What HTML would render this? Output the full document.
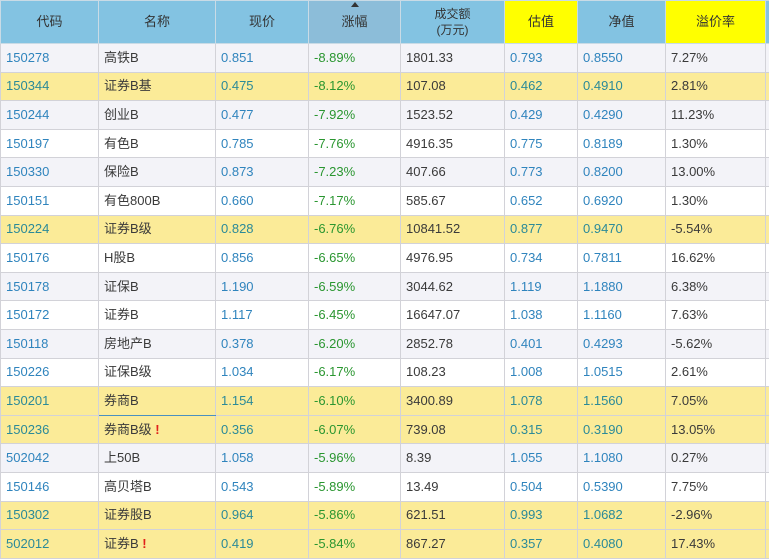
<!DOCTYPE html><html><head><meta charset="utf-8"><style>
body{margin:0;width:769px;height:558px;overflow:hidden;background:#fff;font-family:"Liberation Sans","Noto Sans CJK SC",sans-serif;font-size:13px;}
table{border-collapse:collapse;table-layout:fixed;width:769px;}
td,th{border:1px solid #d2d2d8;padding:0 0 0 5px;height:27.6px;line-height:16px;vertical-align:middle;white-space:nowrap;overflow:hidden;color:#3a3a3a;}
td span,td{vertical-align:middle}
th{background:#83c3e2;font-weight:normal;text-align:center;height:42px;padding:0;color:#333;border-color:#c9dbe6;}
th.y{background:#ffff00;}
th.s{background:#8cbdd9;position:relative;}
th.s:before{content:"";position:absolute;top:1px;left:50%;margin-left:-4px;border:4px solid transparent;border-bottom:5px solid #333;border-top:0;}
tr.l td{background:#f3f3f8}tr.w td{background:#fff}tr.y td{background:#fbeb98}
.b{color:#2f84bd}.g{color:#2a9630}
tr.y .b{color:#2b8a98}
.r{color:#e0201b;font-weight:bold;vertical-align:baseline}
</style></head><body><table>
<colgroup><col width="98"><col width="117"><col width="93"><col width="92"><col width="104"><col width="73"><col width="88"><col width="100"><col width="4"></colgroup>
<tr><th>代码</th><th>名称</th><th>现价</th><th class="s">涨幅</th><th style="font-size:12px;line-height:16px">成交额<br>(万元)</th><th class="y">估值</th><th>净值</th><th class="y">溢价率</th><th></th></tr>
<tr class="l"><td class="b">150278</td><td>高铁B</td><td class="b">0.851</td><td class="g">-8.89%</td><td>1801.33</td><td class="b">0.793</td><td class="b">0.8550</td><td>7.27%</td><td></td></tr>
<tr class="y"><td class="b">150344</td><td>证券B基</td><td class="b">0.475</td><td class="g">-8.12%</td><td>107.08</td><td class="b">0.462</td><td class="b">0.4910</td><td>2.81%</td><td></td></tr>
<tr class="l"><td class="b">150244</td><td>创业B</td><td class="b">0.477</td><td class="g">-7.92%</td><td>1523.52</td><td class="b">0.429</td><td class="b">0.4290</td><td>11.23%</td><td></td></tr>
<tr class="w"><td class="b">150197</td><td>有色B</td><td class="b">0.785</td><td class="g">-7.76%</td><td>4916.35</td><td class="b">0.775</td><td class="b">0.8189</td><td>1.30%</td><td></td></tr>
<tr class="l"><td class="b">150330</td><td>保险B</td><td class="b">0.873</td><td class="g">-7.23%</td><td>407.66</td><td class="b">0.773</td><td class="b">0.8200</td><td>13.00%</td><td></td></tr>
<tr class="w"><td class="b">150151</td><td>有色800B</td><td class="b">0.660</td><td class="g">-7.17%</td><td>585.67</td><td class="b">0.652</td><td class="b">0.6920</td><td>1.30%</td><td></td></tr>
<tr class="y"><td class="b">150224</td><td>证券B级</td><td class="b">0.828</td><td class="g">-6.76%</td><td>10841.52</td><td class="b">0.877</td><td class="b">0.9470</td><td>-5.54%</td><td></td></tr>
<tr class="w"><td class="b">150176</td><td>H股B</td><td class="b">0.856</td><td class="g">-6.65%</td><td>4976.95</td><td class="b">0.734</td><td class="b">0.7811</td><td>16.62%</td><td></td></tr>
<tr class="l"><td class="b">150178</td><td>证保B</td><td class="b">1.190</td><td class="g">-6.59%</td><td>3044.62</td><td class="b">1.119</td><td class="b">1.1880</td><td>6.38%</td><td></td></tr>
<tr class="w"><td class="b">150172</td><td>证券B</td><td class="b">1.117</td><td class="g">-6.45%</td><td>16647.07</td><td class="b">1.038</td><td class="b">1.1160</td><td>7.63%</td><td></td></tr>
<tr class="l"><td class="b">150118</td><td>房地产B</td><td class="b">0.378</td><td class="g">-6.20%</td><td>2852.78</td><td class="b">0.401</td><td class="b">0.4293</td><td>-5.62%</td><td></td></tr>
<tr class="w"><td class="b">150226</td><td>证保B级</td><td class="b">1.034</td><td class="g">-6.17%</td><td>108.23</td><td class="b">1.008</td><td class="b">1.0515</td><td>2.61%</td><td></td></tr>
<tr class="y"><td class="b">150201</td><td style="border-bottom:1px solid #4a90c0">券商B</td><td class="b">1.154</td><td class="g">-6.10%</td><td>3400.89</td><td class="b">1.078</td><td class="b">1.1560</td><td>7.05%</td><td></td></tr>
<tr class="y"><td class="b">150236</td><td>券商B级 <span class="r">!</span></td><td class="b">0.356</td><td class="g">-6.07%</td><td>739.08</td><td class="b">0.315</td><td class="b">0.3190</td><td>13.05%</td><td></td></tr>
<tr class="l"><td class="b">502042</td><td>上50B</td><td class="b">1.058</td><td class="g">-5.96%</td><td>8.39</td><td class="b">1.055</td><td class="b">1.1080</td><td>0.27%</td><td></td></tr>
<tr class="w"><td class="b">150146</td><td>高贝塔B</td><td class="b">0.543</td><td class="g">-5.89%</td><td>13.49</td><td class="b">0.504</td><td class="b">0.5390</td><td>7.75%</td><td></td></tr>
<tr class="y"><td class="b">150302</td><td>证券股B</td><td class="b">0.964</td><td class="g">-5.86%</td><td>621.51</td><td class="b">0.993</td><td class="b">1.0682</td><td>-2.96%</td><td></td></tr>
<tr class="y"><td class="b">502012</td><td>证券B <span class="r">!</span></td><td class="b">0.419</td><td class="g">-5.84%</td><td>867.27</td><td class="b">0.357</td><td class="b">0.4080</td><td>17.43%</td><td></td></tr>
</table></body></html>
